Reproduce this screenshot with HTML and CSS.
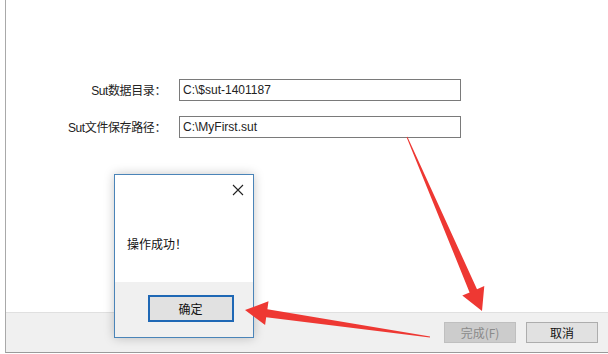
FILE: index.html
```html
<!DOCTYPE html>
<html lang="zh-CN">

<head>
    <meta charset="UTF-8">
    <meta name="viewport" content="width=device-width, initial-scale=1.0">
    <title>Sut 安装向导</title>
    <link rel="stylesheet" href="styles.css">
</head>

<body>
<!-- Wizard window -->
<div class="window">
    <div class="content">
        <div class="form">
            <label class="label">Sut数据目录：</label>
            <div class="field">C:\$sut-1401187</div>
            <label class="label">Sut文件保存路径：</label>
            <div class="field">C:\MyFirst.sut</div>
        </div>
    </div>
    <div class="footer">
        <button class="btn disabled">完成(F)</button>
        <button class="btn">取消</button>
    </div>
</div>

<!-- Message box -->
<div class="dialog">
    <div class="dialog-top">
        <div class="dialog-title">
            <svg class="close" width="12" height="12" viewBox="0 0 12 12">
                <path d="M1 1 L11 11 M11 1 L1 11" stroke="#222" stroke-width="1.1" fill="none"/>
            </svg>
        </div>
        <div class="dialog-msg">操作成功！</div>
    </div>
    <div class="dialog-foot">
        <button class="ok">确定</button>
    </div>
</div>

<!-- Red annotation arrows -->
<svg class="arrows" width="608" height="354" viewBox="0 0 608 354">
    <polygon fill="#ee3833" points="406.6,137.2 407.4,136.8 477,289.2 484.3,286 482,311 462.3,295.6 469.6,292.4"/>
    <polygon fill="#ee3833" points="430.1,336.5 429.9,337.5 266.2,317.2 265.1,325.1 245,310 268.5,301.3 267.4,309.2"/>
</svg>
</body>

</html>
```

FILE: styles.css
```css
/* Basic page */
body {
    margin: 0;
    width: 608px;
    height: 354px;
    overflow: hidden;
    background: #fff;
    font-family: "Liberation Sans", "Noto Sans CJK SC", sans-serif;
    font-size: 12px;
    color: #222;
    position: relative;
}

.window {
    margin-left: 5px;
    height: 353px;
    border-left: 1px solid #a9a9a9;
    border-bottom: 1px solid #9a9a9a;
    display: flex;
    flex-direction: column;
    box-sizing: border-box;
}

.content {
    flex: 1;
    padding-top: 79px;
}

.form {
    display: grid;
    grid-template-columns: 160px 282px;
    grid-auto-rows: 22px;
    column-gap: 13px;
    row-gap: 15px;
}

.label {
    text-align: right;
    line-height: 22px;
    padding-top: 1px;
    letter-spacing: -0.4px;
}

.field {
    border: 1px solid #7a7a7a;
    background: #fff;
    line-height: 20px;
    padding-left: 3px;
    box-sizing: border-box;
}

.footer {
    height: 40px;
    background: #f0f0f0;
    border-top: 1px solid #e0e0e0;
    display: flex;
    justify-content: flex-end;
    align-items: flex-start;
    gap: 10px;
    padding-right: 10px;
    padding-top: 9px;
    box-sizing: border-box;
}

.btn {
    width: 72px;
    height: 21px;
    background: #e1e1e1;
    border: 1px solid #adadad;
    font-family: "Noto Sans CJK SC", sans-serif;
    font-size: 12px;
    color: #111;
    padding: 0;
}

.btn.disabled {
    background: #cccccc;
    border-color: #bfbfbf;
    color: #8a8a8a;
}

/* Message box */
.dialog {
    position: absolute;
    left: 114px;
    top: 174px;
    width: 140px;
    height: 164px;
    border: 1px solid #4a84b8;
    box-sizing: border-box;
    background: #fff;
    box-shadow: 0 0 10px rgba(0, 0, 0, 0.22);
    display: flex;
    flex-direction: column;
}

.dialog-top {
    flex: 1;
}

.dialog-title {
    height: 30px;
    display: flex;
    justify-content: flex-end;
    align-items: center;
    padding-right: 9px;
}

.dialog-msg {
    font-family: "Noto Sans CJK SC", sans-serif;
    padding-left: 12px;
    margin-top: 30px;
    color: #111;
}

.dialog-foot {
    height: 55px;
    background: #f0f0f0;
    display: flex;
    justify-content: center;
    padding-top: 13px;
    box-sizing: border-box;
}

.ok {
    width: 86px;
    height: 27px;
    margin-left: 13px;
    background: #e1e1e1;
    border: 2px solid #1f68b5;
    font-family: "Noto Sans CJK SC", sans-serif;
    font-size: 12px;
    color: #111;
    padding: 0;
}

.arrows {
    position: absolute;
    left: 0;
    top: 0;
}
```
